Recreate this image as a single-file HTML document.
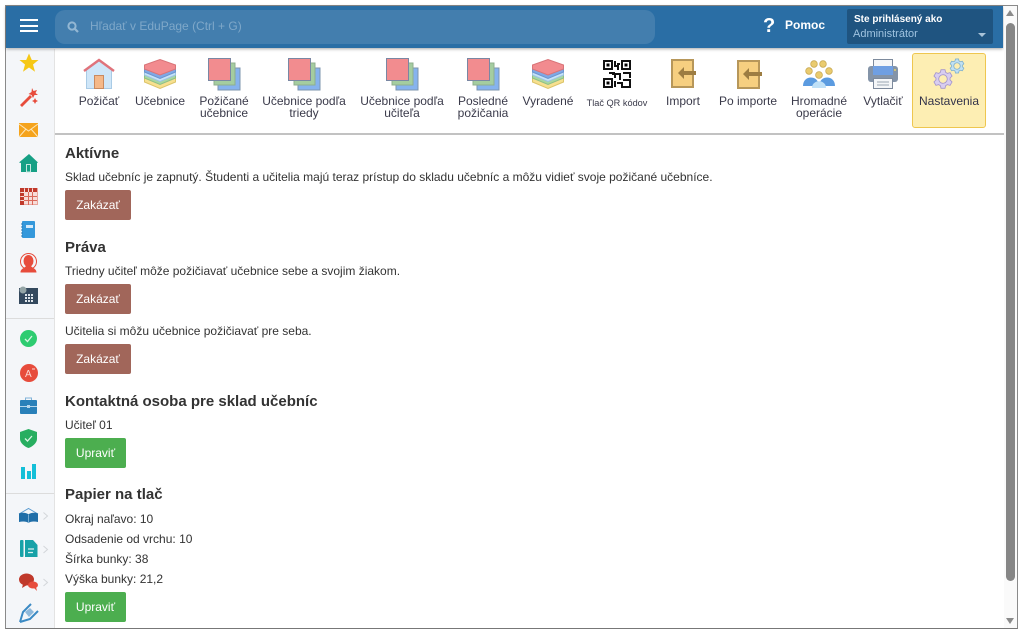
<!DOCTYPE html>
<html><head><meta charset="utf-8"><style>
html,body{margin:0;padding:0;background:#fff;overflow:hidden}
body{width:1023px;height:634px;position:relative;font-family:"Liberation Sans",sans-serif;color:#333;font-size:12px}
.a{position:absolute}
.lbl{position:absolute;text-align:center;font-size:12px;line-height:12px;color:#3a3a4a;white-space:nowrap;transform:translateX(-50%)}
h3{position:absolute;left:65px;margin:0;font-size:15px;line-height:18px;font-weight:bold;color:#333;white-space:nowrap}
.t{position:absolute;left:65px;font-size:12px;line-height:14px;color:#333;white-space:nowrap}
.b{position:absolute;left:65px;width:66px;height:30px;border-radius:2px;color:#fff;font-size:12px;line-height:31px;text-align:center;background:#a1665a;box-sizing:border-box}
.g{background:#4cae4f;width:61px}
svg{position:absolute;overflow:visible}
</style></head><body>
<div class="a" style="left:5px;top:5px;width:1013px;height:624px;border:1px solid #8a8a8a;box-sizing:border-box;border-bottom-color:#777"></div>
<div class="a" style="left:6px;top:49px;width:48px;height:579px;background:#f4f6f9;border-right:1px solid #e3e3e3"></div>
<div class="a" style="left:6px;top:6px;width:997px;height:42px;background:#2a6ea5;box-shadow:0 1px 3px rgba(0,0,0,.35)"></div>
<div class="a" style="left:20px;top:19px;width:18px;height:2px;background:#fff"></div>
<div class="a" style="left:20px;top:25px;width:18px;height:2px;background:#fff"></div>
<div class="a" style="left:20px;top:30px;width:18px;height:2px;background:#fff"></div>
<div class="a" style="left:55px;top:10px;width:600px;height:34px;background:#437eae;border-radius:10px"></div>
<svg style="left:67px;top:21px" width="12" height="12" viewBox="0 0 12 12"><circle cx="5" cy="5" r="3.6" fill="none" stroke="#93b7d3" stroke-width="2"/><path d="M7.8 7.8L11 11" stroke="#93b7d3" stroke-width="2.2"/></svg>
<div class="a" style="left:90px;top:19px;font-size:12px;line-height:15px;color:#7fa8c9;white-space:nowrap">Hľadať v EduPage (Ctrl + G)</div>
<div class="a" style="left:763px;top:16px;font-size:20px;line-height:20px;font-weight:bold;color:#fff">?</div>
<div class="a" style="left:785px;top:18px;font-size:12px;line-height:15px;font-weight:bold;color:#fff">Pomoc</div>
<div class="a" style="left:847px;top:9px;width:146px;height:35px;background:#1f5480;border-radius:2px"></div>
<div class="a" style="left:854px;top:13px;font-size:10px;line-height:13px;font-weight:bold;color:#fff;white-space:nowrap">Ste prihlásený ako</div>
<div class="a" style="left:853px;top:28px;font-size:11px;line-height:13px;color:#9fc3e0;white-space:nowrap">Administrátor</div>
<div class="a" style="left:978px;top:33px;width:0;height:0;border-left:4px solid transparent;border-right:4px solid transparent;border-top:4px solid #a9c3d8"></div>

<!-- toolbar -->
<div class="a" style="left:55px;top:133px;width:949px;height:2px;background:#c2c2c2"></div>
<div class="a" style="left:912px;top:53px;width:74px;height:75px;background:#fdeeb3;border:1px solid #eec64f;border-radius:3px;box-sizing:border-box"></div>

<!-- house -->
<svg style="left:83px;top:58px" width="32" height="32" viewBox="0 0 32 32"><path d="M3.500 12L16 3L28.500 12V30.500H3.500Z" fill="#cfe6f8" stroke="#a9cbe6"/><path d="M1 13L16 2L31 13" fill="none" stroke="#e0737b" stroke-width="2.400"/><rect x="11.500" y="17.500" width="9" height="13" fill="#f5b888" stroke="#c98a60"/></svg>
<div class="lbl" style="left:99px;top:95px">Požičať</div>
<!-- stack 1 -->
<svg style="left:144px;top:59px" width="32" height="30" viewBox="0 0 32 30"><path d="M.5 19L16 13L31.500 19V23L16 29.500L.5 23Z" fill="#f7e08f" stroke="#dcc46a"/><path d="M.5 16L16 10L31.500 16V19L16 25.500L.5 19Z" fill="#a8d8a0" stroke="#8fbf88"/><path d="M.5 13L16 7L31.500 13V16L16 22.500L.5 16Z" fill="#c6e3f8" stroke="#9cc3e4"/><path d="M.5 10L16 4L31.500 10V13L16 19.500L.5 13Z" fill="#7ea9e6" stroke="#6d95cf"/><path d="M.5 6L16 .5L31.500 6V10L16 16L.5 10Z" fill="#f28b8f" stroke="#d97478"/></svg>
<div class="lbl" style="left:160px;top:95px">Učebnice</div>
<!-- squares -->
<svg style="left:208px;top:58px" width="33" height="33" viewBox="0 0 33 33"><rect x="10" y="10" width="22" height="22" fill="#86b3ee" stroke="#7d94ad"/><rect x="6" y="5" width="21" height="22" fill="#a4cda0" stroke="#8faf8e"/><rect x="0.500" y="0.500" width="22" height="22" fill="#f28c8f" stroke="#7a87a3"/></svg>
<div class="lbl" style="left:224px;top:95px">Požičané<br>učebnice</div>
<svg style="left:288px;top:58px" width="33" height="33" viewBox="0 0 33 33"><rect x="10" y="10" width="22" height="22" fill="#86b3ee" stroke="#7d94ad"/><rect x="6" y="5" width="21" height="22" fill="#a4cda0" stroke="#8faf8e"/><rect x="0.500" y="0.500" width="22" height="22" fill="#f28c8f" stroke="#7a87a3"/></svg>
<div class="lbl" style="left:304px;top:95px">Učebnice podľa<br>triedy</div>
<svg style="left:386px;top:58px" width="33" height="33" viewBox="0 0 33 33"><rect x="10" y="10" width="22" height="22" fill="#86b3ee" stroke="#7d94ad"/><rect x="6" y="5" width="21" height="22" fill="#a4cda0" stroke="#8faf8e"/><rect x="0.500" y="0.500" width="22" height="22" fill="#f28c8f" stroke="#7a87a3"/></svg>
<div class="lbl" style="left:402px;top:95px">Učebnice podľa<br>učiteľa</div>
<svg style="left:467px;top:58px" width="33" height="33" viewBox="0 0 33 33"><rect x="10" y="10" width="22" height="22" fill="#86b3ee" stroke="#7d94ad"/><rect x="6" y="5" width="21" height="22" fill="#a4cda0" stroke="#8faf8e"/><rect x="0.500" y="0.500" width="22" height="22" fill="#f28c8f" stroke="#7a87a3"/></svg>
<div class="lbl" style="left:483px;top:95px">Posledné<br>požičania</div>
<svg style="left:532px;top:59px" width="32" height="30" viewBox="0 0 32 30"><path d="M.5 19L16 13L31.500 19V23L16 29.500L.5 23Z" fill="#f7e08f" stroke="#dcc46a"/><path d="M.5 16L16 10L31.500 16V19L16 25.500L.5 19Z" fill="#a8d8a0" stroke="#8fbf88"/><path d="M.5 13L16 7L31.500 13V16L16 22.500L.5 16Z" fill="#c6e3f8" stroke="#9cc3e4"/><path d="M.5 10L16 4L31.500 10V13L16 19.500L.5 13Z" fill="#7ea9e6" stroke="#6d95cf"/><path d="M.5 6L16 .5L31.500 6V10L16 16L.5 10Z" fill="#f28b8f" stroke="#d97478"/></svg>
<div class="lbl" style="left:548px;top:95px">Vyradené</div>
<!-- QR -->
<svg style="left:603px;top:60px" width="28" height="28" viewBox="0 0 28 28"><g fill="none" stroke="#111" stroke-width="2"><rect x="1" y="1" width="8" height="8"/><rect x="19" y="1" width="8" height="8"/><rect x="1" y="19" width="8" height="8"/><path d="M12 1V6H15V10M12 13H6M9 14H17V20M14 4H17M12 14V18M20 13H27V18M20 20H27V27H19V23H14M12 21V27"/></g><rect x="3.500" y="3.500" width="3" height="3"/><rect x="21.500" y="3.500" width="3" height="3"/><rect x="3.500" y="21.500" width="3" height="3"/></svg>
<div class="lbl" style="left:617px;top:97px;font-size:9.200px">Tlač QR kódov</div>
<!-- import -->
<svg style="left:671px;top:59px" width="26" height="29" viewBox="0 0 26 29"><rect x="1" y="1" width="21" height="27" fill="#f6cf80" stroke="#b7975a" stroke-width="2"/><path d="M25 12H13V8L7 14L13 20V16H25Z" fill="#9d7d42"/></svg>
<div class="lbl" style="left:683px;top:95px">Import</div>
<svg style="left:737px;top:60px" width="26" height="29" viewBox="0 0 26 29"><rect x="1" y="1" width="21" height="27" fill="#f6cf80" stroke="#b7975a" stroke-width="2"/><path d="M25 12H12V8L6 14L12 20V16H25Z" fill="#9d7d42"/></svg>
<div class="lbl" style="left:748px;top:95px">Po importe</div>
<!-- people -->
<svg style="left:803px;top:59px" width="33" height="30" viewBox="0 0 33 30"><g fill="#eacb6e" stroke="#c9aa55" stroke-width=".8"><circle cx="11" cy="5" r="3.300"/><circle cx="20" cy="5" r="3.300"/><circle cx="6" cy="12" r="3.300"/><circle cx="26" cy="12" r="3.300"/><circle cx="16" cy="16" r="3.400"/></g><path d="M0 27C0 17 12 16 15 23L12 27Z" fill="#5b9be0"/><path d="M32 27C32 17 20 16 17 23L20 27Z" fill="#5b9be0"/><path d="M9 29C9 20 23 20 23 29Z" fill="#bfe0f7"/></svg>
<div class="lbl" style="left:819px;top:95px">Hromadné<br>operácie</div>
<!-- printer -->
<svg style="left:868px;top:59px" width="31" height="31" viewBox="0 0 31 31"><rect x="5.500" y=".5" width="19" height="14" fill="#f4f6f8" stroke="#7d8a9c"/><rect x="0" y="7" width="30" height="16" rx="3" fill="#8494a8"/><rect x="5" y="7" width="20" height="9" fill="#6f9fe2"/><rect x="5.500" y="19.500" width="19" height="10" fill="#f4f6f8" stroke="#7d8a9c"/><path d="M9 23H21M9 26H21" stroke="#9aa5b2"/><circle cx="27" cy="11" r="1" fill="#e5d46a"/></svg>
<div class="lbl" style="left:883px;top:95px">Vytlačiť</div>
<!-- gears -->
<svg style="left:934px;top:59px" width="32" height="31" viewBox="0 0 32 31">
<g transform="translate(9 20) rotate(30) scale(.95)"><path fill-rule="evenodd" d="M6.950 -2.810L9.780 -2.080L9.780 2.080L6.950 2.810L5.910 4.620L6.690 7.430L3.090 9.510L1.040 7.430L-1.040 7.430L-3.090 9.510L-6.690 7.430L-5.910 4.620L-6.950 2.810L-9.780 2.080L-9.780 -2.080L-6.950 -2.810L-5.910 -4.620L-6.690 -7.430L-3.090 -9.510L-1.040 -7.430L1.040 -7.430L3.090 -9.510L6.690 -7.430L5.910 -4.620ZM4.500 0A4.500 4.500 0 1 0 -4.500 0A4.500 4.500 0 1 0 4.500 0Z" fill="#d8cdf0" stroke="#a596cc" stroke-width=".9"/></g>
<g transform="translate(23 7) rotate(30) scale(.72)"><path fill-rule="evenodd" d="M6.950 -2.810L9.780 -2.080L9.780 2.080L6.950 2.810L5.910 4.620L6.690 7.430L3.090 9.510L1.040 7.430L-1.040 7.430L-3.090 9.510L-6.690 7.430L-5.910 4.620L-6.950 2.810L-9.780 2.080L-9.780 -2.080L-6.950 -2.810L-5.910 -4.620L-6.690 -7.430L-3.090 -9.510L-1.040 -7.430L1.040 -7.430L3.090 -9.510L6.690 -7.430L5.910 -4.620ZM4.500 0A4.500 4.500 0 1 0 -4.500 0A4.500 4.500 0 1 0 4.500 0Z" fill="#c0e0f4" stroke="#7fb0cc" stroke-width="1.100"/></g></svg>
<div class="lbl" style="left:949px;top:95px;color:#33334a">Nastavenia</div>

<!-- content -->
<h3 style="top:145px">Aktívne</h3>
<div class="t" style="top:170px">Sklad učebníc je zapnutý. Študenti a učitelia majú teraz prístup do skladu učebníc a môžu vidieť svoje požičané učebníce.</div>
<div class="b" style="top:190px">Zakázať</div>
<h3 style="top:239px">Práva</h3>
<div class="t" style="top:264px">Triedny učiteľ môže požičiavať učebnice sebe a svojim žiakom.</div>
<div class="b" style="top:284px">Zakázať</div>
<div class="t" style="top:324px">Učitelia si môžu učebnice požičiavať pre seba.</div>
<div class="b" style="top:344px">Zakázať</div>
<h3 style="top:393px">Kontaktná osoba pre sklad učebníc</h3>
<div class="t" style="top:418px">Učiteľ 01</div>
<div class="b g" style="top:438px">Upraviť</div>
<h3 style="top:486px">Papier na tlač</h3>
<div class="t" style="top:512px">Okraj naľavo: 10</div>
<div class="t" style="top:532px">Odsadenie od vrchu: 10</div>
<div class="t" style="top:552px">Šírka bunky: 38</div>
<div class="t" style="top:572px">Výška bunky: 21,2</div>
<div class="b g" style="top:592px">Upraviť</div>

<!-- scrollbar -->
<div class="a" style="left:1004px;top:6px;width:13px;height:622px;background:#fafafa"></div>
<div class="a" style="left:1006px;top:10px;width:0;height:0;border-left:4.500px solid transparent;border-right:4.500px solid transparent;border-bottom:6px solid #8a8a8a"></div>
<div class="a" style="left:1006px;top:23px;width:9px;height:558px;background:#868686;border-radius:5px"></div>
<div class="a" style="left:1006px;top:618px;width:0;height:0;border-left:4.500px solid transparent;border-right:4.500px solid transparent;border-top:6px solid #8a8a8a"></div>

<!-- sidebar icons -->
<svg style="left:19px;top:53px" width="20" height="20" viewBox="0 0 20 20"><path d="M10 0.500L12.800 7H19.500L14 11.500L16 18.800L10 14.500L4 18.800L6 11.500L.5 7H7.200Z" fill="#f6c816"/></svg>
<svg style="left:19px;top:87px" width="20" height="20" viewBox="0 0 20 20"><path d="M1 18L11 8L13 10L3 20Z" fill="#e74c3c"/><path d="M13 1L14.500 4L18 3L16.500 6L19 8L15.500 8L14 11L12.500 8L9.500 7L12.500 5Z" fill="#e74c3c"/><path d="M16 11L17 13L19 14L17 15L16 17L15 15L13 14L15 13Z" fill="#e74c3c"/></svg>
<svg style="left:19px;top:123px" width="20" height="15" viewBox="0 0 20 15"><rect width="19" height="14" fill="#f5a31c"/><path d="M0 1L9.500 8L19 1M0 14L7 6M19 14L12 6" fill="none" stroke="#fde6b8" stroke-width="1"/></svg>
<svg style="left:19px;top:154px" width="20" height="19" viewBox="0 0 20 19"><path d="M0 8.500L10 0L19 8.500L18 9V18H2V9Z" fill="#16a085"/><rect x="7.500" y="10.500" width="4" height="7.500" fill="none" stroke="#c5e8e0"/></svg>
<svg style="left:20px;top:188px" width="18" height="17" viewBox="0 0 18 17"><rect x=".5" y=".5" width="17" height="16" fill="#f7dcd8" stroke="#e8a59d"/><g fill="#c0392b"><rect width="4" height="4"/><rect x="5" width="3" height="4"/><rect x="9" width="3" height="4"/><rect x="13" width="4" height="4"/><rect y="5" width="4" height="3"/><rect y="9" width="4" height="3"/><rect y="13" width="4" height="4"/></g><path d="M8.500 4V17M12.500 4V17M4 8.500H17M4 12.500H17" stroke="#d9685a"/></svg>
<svg style="left:21px;top:221px" width="15" height="18" viewBox="0 0 15 18"><rect x="1" width="13" height="17" rx="1" fill="#3498db"/><rect x="5" y="4" width="7" height="3" fill="#d5eafa"/><path d="M0 3H2M0 6H2M0 9H2M0 12H2M0 15H2" stroke="#2a7ab5"/></svg>
<svg style="left:20px;top:253px" width="18" height="20" viewBox="0 0 18 20"><circle cx="8.500" cy="8.500" r="8" fill="none" stroke="#e74c3c"/><ellipse cx="8.500" cy="8" rx="5" ry="6" fill="#e74c3c"/><path d="M0.500 19.500C.5 15 6 15 6.500 12H10.500C11 15 16.500 15 16.500 19.500Z" fill="#e74c3c"/></svg>
<svg style="left:19px;top:286px" width="19" height="18" viewBox="0 0 19 18"><rect y="2" width="19" height="16" fill="#34495e"/><g fill="#dfe5ea"><rect x="6" y="8" width="2" height="2"/><rect x="9" y="8" width="2" height="2"/><rect x="12" y="8" width="2" height="2"/><rect x="6" y="11" width="2" height="2"/><rect x="9" y="11" width="2" height="2"/><rect x="12" y="11" width="2" height="2"/><rect x="6" y="14" width="2" height="2"/><rect x="9" y="14" width="2" height="2"/><rect x="12" y="14" width="2" height="2"/></g><circle cx="4" cy="4" r="3.500" fill="#95a5a6"/></svg>
<div class="a" style="left:6px;top:318px;width:48px;height:1px;background:#dcdcdc"></div>
<svg style="left:20px;top:330px" width="17" height="17" viewBox="0 0 17 17"><circle cx="8.500" cy="8.500" r="8.500" fill="#2ecc71"/><path d="M5 9L7.500 11.500L12 6" fill="none" stroke="#d8f5e3" stroke-width="1.300"/></svg>
<svg style="left:20px;top:364px" width="18" height="18" viewBox="0 0 18 18"><circle cx="9" cy="9" r="9" fill="#e74c3c"/><text x="5" y="13" font-size="10" font-family="Liberation Sans" fill="#fbd9d5">A</text><path d="M12 5H15" stroke="#fbd9d5"/></svg>
<svg style="left:20px;top:397px" width="17" height="17" viewBox="0 0 17 17"><rect y="3" width="17" height="14" rx="1" fill="#2980b9"/><path d="M5.500 3V1H11.500V3" fill="none" stroke="#7fb3d9"/><path d="M0 9.500H17" stroke="#b6d6ec"/><rect x="7" y="8" width="3" height="3" fill="#b6d6ec"/></svg>
<svg style="left:20px;top:429px" width="17" height="19" viewBox="0 0 17 19"><path d="M8.500 0L17 3V10C17 14 12 18 8.500 19C5 18 0 14 0 10V3Z" fill="#27ae60"/><path d="M5 9.500L7.500 12L12 7" fill="none" stroke="#d8f5e3" stroke-width="1.300"/></svg>
<svg style="left:21px;top:464px" width="15" height="15" viewBox="0 0 15 15"><rect y="3" width="4" height="12" fill="#13bfd8"/><rect x="6" y="7" width="4" height="8" fill="#13bfd8"/><rect x="11" y="0" width="4" height="15" fill="#13bfd8"/></svg>
<div class="a" style="left:6px;top:493px;width:48px;height:1px;background:#dcdcdc"></div>
<svg style="left:19px;top:508px" width="19" height="16" viewBox="0 0 19 16"><path d="M0 6L9.500 .5L19 6" fill="none" stroke="#5b9bd0"/><path d="M0 5.500C4 4 8 5 9.500 6.500C11 5 15 4 19 5.500V14C15 13 11 13.500 9.500 15C8 13.500 4 13 0 14Z" fill="#1f6ea8"/><path d="M9.500 7V15" stroke="#8fbcdc" stroke-width=".8"/></svg>
<svg style="left:20px;top:540px" width="18" height="18" viewBox="0 0 18 18"><rect width="3.500" height="17" rx="1" fill="#17a2a8"/><path d="M5 0H13L17.500 5V17H5Z" fill="#17a2a8"/><path d="M8 9H14M8 12.500H13" stroke="#d8f0f0" stroke-width="1.200"/></svg>
<svg style="left:19px;top:573px" width="19" height="18" viewBox="0 0 19 18"><ellipse cx="7.500" cy="6.500" rx="7.500" ry="6" fill="#c0392b"/><path d="M4 11L3 15L8 12Z" fill="#c0392b"/><ellipse cx="14" cy="12" rx="5" ry="3.500" fill="#e74c3c"/><path d="M15 15L18 18L17 14Z" fill="#e74c3c"/></svg>
<svg style="left:19px;top:603px" width="20" height="20" viewBox="0 0 20 20"><path d="M1 19L4 9L12 1" fill="none" stroke="#3b8ac4" stroke-width="2"/><path d="M1 19L11 16L19 8" fill="none" stroke="#3b8ac4" stroke-width="2"/><path d="M6 9L11 5L15 9L10 14Z" fill="#8fb9db"/></svg>
<svg style="left:43px;top:512px" width="6" height="90" viewBox="0 0 6 90"><path d="M.5 .5L4.500 4L.5 7.500M.5 34L4.500 37.500L.5 41M.5 67L4.500 70.500L.5 74" fill="none" stroke="#d3d6da"/></svg>
</body></html>
